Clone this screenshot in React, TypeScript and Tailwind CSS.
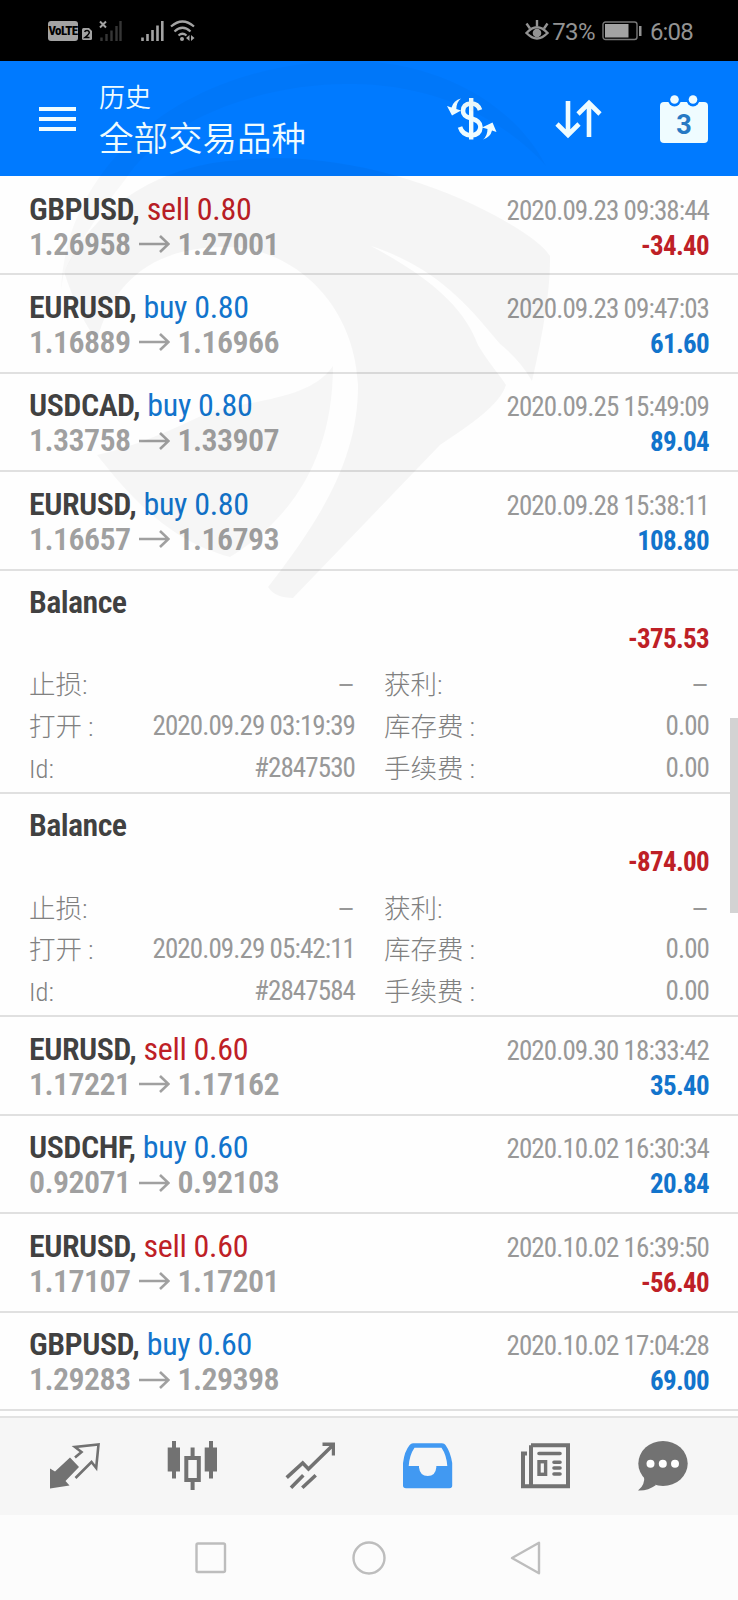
import React from 'react';

type Deal = {
  kind: 'deal';
  symbol: string;
  side: 'buy' | 'sell';
  volume: string;
  open: string;
  close: string;
  time: string;
  profit: string;
};

type Balance = {
  kind: 'balance';
  amount: string;
  time: string;
  id: string;
};

const history: (Deal | Balance)[] = [
  { kind: 'deal', symbol: 'GBPUSD', side: 'sell', volume: '0.80', open: '1.26958', close: '1.27001', time: '2020.09.23 09:38:44', profit: '-34.40' },
  { kind: 'deal', symbol: 'EURUSD', side: 'buy', volume: '0.80', open: '1.16889', close: '1.16966', time: '2020.09.23 09:47:03', profit: '61.60' },
  { kind: 'deal', symbol: 'USDCAD', side: 'buy', volume: '0.80', open: '1.33758', close: '1.33907', time: '2020.09.25 15:49:09', profit: '89.04' },
  { kind: 'deal', symbol: 'EURUSD', side: 'buy', volume: '0.80', open: '1.16657', close: '1.16793', time: '2020.09.28 15:38:11', profit: '108.80' },
  { kind: 'balance', amount: '-375.53', time: '2020.09.29 03:19:39', id: '#2847530' },
  { kind: 'balance', amount: '-874.00', time: '2020.09.29 05:42:11', id: '#2847584' },
  { kind: 'deal', symbol: 'EURUSD', side: 'sell', volume: '0.60', open: '1.17221', close: '1.17162', time: '2020.09.30 18:33:42', profit: '35.40' },
  { kind: 'deal', symbol: 'USDCHF', side: 'buy', volume: '0.60', open: '0.92071', close: '0.92103', time: '2020.10.02 16:30:34', profit: '20.84' },
  { kind: 'deal', symbol: 'EURUSD', side: 'sell', volume: '0.60', open: '1.17107', close: '1.17201', time: '2020.10.02 16:39:50', profit: '-56.40' },
  { kind: 'deal', symbol: 'GBPUSD', side: 'buy', volume: '0.60', open: '1.29283', close: '1.29398', time: '2020.10.02 17:04:28', profit: '69.00' },
];

const amountColor = (value: string) => (value.startsWith('-') ? 'text-[#be2026]' : 'text-[#1274cc]');

const StatusBar = () => (
  <div className="flex h-[61px] items-center bg-black pl-[48px] pr-[45px] text-[#939393]">
    <div className={'flex h-5 w-[30px] items-center justify-center rounded-[3px] bg-[#a3a3a3] font-["Roboto_Condensed"] text-[13px] font-extrabold tracking-[-0.6px] text-black'}>
      VoLTE
    </div>
    <svg className="ml-1 mt-[7px] h-3 w-[10px]" viewBox="0 0 10 12">
      <path d="M0 1.5Q0 0 1.500 0H7L10 3V10.500Q10 12 8.500 12H1.500Q0 12 0 10.500Z" fill="#a3a3a3" />
      <path d="M2.700 4Q3 2.500 5 2.500T7.300 4.500Q7.300 6 2.900 9.600H7.500" fill="none" stroke="#000" strokeWidth="1.500" />
    </svg>
    <svg className="ml-[6px] h-[22px] w-6" viewBox="0 0 24 22">
      <path d="M2 1.500L8 7.500M8 1.500L2 7.500" stroke="#a3a3a3" strokeWidth="2" />
      <path d="M3.500 21V17.500M8.500 21V14M13.500 21V10.500M18.500 21V6M22.500 21V1" stroke="#363636" strokeWidth="2.400" />
    </svg>
    <svg className="ml-[18px] h-[22px] w-6" viewBox="0 0 24 22">
      <path d="M2.500 21V17.500M7.500 21V14M12.500 21V10M17.500 21V5.500M22.300 21V1" stroke="#a3a3a3" strokeWidth="2.600" />
    </svg>
    <svg className="ml-[6px] h-[22px] w-[26px]" viewBox="0 0 26 22">
      <g fill="none" stroke="#a3a3a3" strokeWidth="2.200">
        <path d="M1 6.500Q12.500 -3.500 24 6.500" />
        <path d="M4.500 11.500Q12.500 4 20.500 11.500" />
        <path d="M8.500 15.500Q12.500 12 16.500 15.500" />
      </g>
      <circle cx="12" cy="19" r="2" fill="#a3a3a3" />
      <path d="M19.500 15V21L16 18ZM21 15V21L24.500 18Z" fill="#a3a3a3" />
    </svg>
    <svg className="ml-auto h-[22px] w-6" viewBox="0 0 24 22">
      <path d="M1.500 13Q12 1.500 22.500 13Q12 24 1.500 13Z" fill="none" stroke="#939393" strokeWidth="2.400" />
      <circle cx="12" cy="13" r="4.300" fill="#939393" />
      <path d="M12 0V6M1.500 3.500L5 8.500M22.500 3.500L19 8.500" stroke="#939393" strokeWidth="2.400" />
    </svg>
    <span className="ml-[3px] mt-[2px] text-[24px] leading-none tracking-[-0.6px]">73%</span>
    <svg className="ml-[7px] h-5 w-10" viewBox="0 0 40 20">
      <rect x="1" y="1" width="34" height="17.500" rx="2.500" fill="none" stroke="#777" strokeWidth="1.400" />
      <rect x="3" y="3" width="23.500" height="13.500" fill="#a3a3a3" />
      <rect x="37" y="5" width="2.500" height="10" fill="#939393" />
    </svg>
    <span className="ml-2 mt-[2px] text-[24px] leading-none tracking-[-0.8px]">6:08</span>
  </div>
);

const Header = () => (
  <div className="flex h-[115px] items-center bg-[#007aff] pl-[39px] pr-[30px] text-[#effcff]">
    <div className="flex w-[37px] flex-col gap-[6px]">
      <div className="h-1 bg-current" />
      <div className="h-1 bg-current" />
      <div className="h-1 bg-current" />
    </div>
    <div className={'ml-[23px] pb-[5px] font-["Noto_Sans_CJK_SC",sans-serif] font-[350]'}>
      <div className="text-[26px] leading-[40px]">历史</div>
      <div className="text-[34.500px] leading-[41px]">全部交易品种</div>
    </div>
    <svg className="ml-auto h-[46px] w-[50px]" viewBox="0 0 50 46">
      <path d="M33 14Q31 7.500 24 7.500Q16 8 16 15Q16 20.500 24.500 22.500Q33.500 25 33.500 31Q33 39 24 39.500Q15.500 39 13 31" fill="none" stroke="currentColor" strokeWidth="4.600" />
      <path d="M24.200 2V43.500" stroke="currentColor" strokeWidth="4.400" />
      <path d="M14 2.500Q9.500 6 9.300 13L14 14.500L5 19.500L0 10L4.500 11.500Q6.500 4.500 14 2.500Z" fill="currentColor" />
      <path d="M36 43.500Q40.500 40 40.500 33L35 31.500L45.500 26.500L49.500 36L45 34.500Q43.500 41 36 43.500Z" fill="currentColor" />
    </svg>
    <svg className="ml-[58px] h-10 w-[47px]" viewBox="0 0 47 40">
      <path d="M13 2V35M2 25L13 36L24 25M34 38V4M23 15L34 4L45 15" fill="none" stroke="currentColor" strokeWidth="4.600" />
    </svg>
    <svg className="ml-[58px] h-12 w-12" viewBox="0 0 48 48">
      <rect y="7" width="48" height="41" rx="4" fill="currentColor" />
      <circle cx="14.500" cy="5" r="6.500" fill="#007aff" />
      <circle cx="33" cy="5" r="6.500" fill="#007aff" />
      <circle cx="14.500" cy="4.500" r="4.300" fill="currentColor" />
      <circle cx="33" cy="4.500" r="4.300" fill="currentColor" />
      <text x="24" y="38.500" textAnchor="middle" fontSize="27" fontWeight="700" fill="#2779c4" fontFamily="Roboto">
        3
      </text>
    </svg>
  </div>
);

const DealRow = ({ deal }: { deal: Deal }) => (
  <div className={'h-[98.4px] border-b-2 border-[#e0e0e0] px-[29px] pt-[13.500px] font-["Roboto_Condensed"]'}>
    <div className="flex items-baseline justify-between">
      <div className="text-[32px] leading-[36px]">
        <span className="font-semibold tracking-[-0.5px] text-[#414141]">{deal.symbol},</span>{' '}
        <span className={deal.side === 'sell' ? 'tracking-[-0.3px] text-[#be2026]' : 'tracking-[-0.3px] text-[#1274cc]'}>
          {deal.side} {deal.volume}
        </span>
      </div>
      <div className="text-[27px] leading-[36px] tracking-[-0.9px] text-[#989898]">{deal.time}</div>
    </div>
    <div className="flex items-baseline justify-between">
      <div className="flex items-center text-[32px] font-semibold leading-[31px] tracking-[-0.6px] text-[#a0a0a0]">
        <span>{deal.open}</span>
        <svg className="ml-[9px] mr-[7px] h-[18px] w-[31px]" viewBox="0 0 31 18">
          <path d="M0 9H29M21 1L29.500 9L21 17" fill="none" stroke="currentColor" strokeWidth="2.600" />
        </svg>
        <span>{deal.close}</span>
      </div>
      <div className={`text-[27px] font-bold leading-[31px] tracking-[-0.7px] ${amountColor(deal.profit)}`}>{deal.profit}</div>
    </div>
  </div>
);

const Detail = ({ label, value }: { label: string; value: string }) => (
  <div className="flex h-[41.700px] items-center justify-between leading-[41px]">
    <span>{label}</span>
    {value === '–' ? (
      <span className="origin-right scale-x-120 font-normal text-[#989898]">{value}</span>
    ) : (
      <span className="text-[27px] font-normal tracking-[-0.9px] text-[#989898]">{value}</span>
    )}
  </div>
);

const BalanceRow = ({ item }: { item: Balance }) => (
  <div className={'h-[223.400px] border-b-2 border-[#e0e0e0] px-[29px] pt-[13.500px] font-["Roboto_Condensed","Noto_Sans_CJK_SC"]'}>
    <div className="text-[32px] font-semibold leading-[36px] tracking-[-0.6px] text-[#414141]">Balance</div>
    <div className={`text-right text-[27px] font-bold leading-[38px] tracking-[-0.7px] ${amountColor(item.amount)}`}>{item.amount}</div>
    <div className="mt-[6px] grid grid-cols-[326px_1fr] gap-x-[29px] text-[26.500px] font-light text-[#808080]">
      <Detail label="止损:" value="–" />
      <Detail label="获利:" value="–" />
      <Detail label="打开 :" value={item.time} />
      <Detail label="库存费 :" value="0.00" />
      <Detail label="Id:" value={item.id} />
      <Detail label="手续费 :" value="0.00" />
    </div>
  </div>
);

const tabIcons = [
  // quotes
  <>
    <path d="M0 27.500L5 30.500L20 16.500L29 26L15.500 40L19.500 44.500L0 47.500Z" fill="currentColor" />
    <path d="M25 16.500L31.500 11L25 6L48.500 3.500L46.200 27L41.500 21L25.500 37" fill="none" stroke="currentColor" strokeWidth="2.600" />
  </>,
  // charts
  <>
    <path d="M.7 6.500H13V30.500H.7ZM5 0H9V37.500H5ZM37.700 6.500H50V30.500H37.700ZM42 0H46V37.500H42Z" fill="currentColor" />
    <path d="M25.600 6.500V16M25.600 40V49" stroke="currentColor" strokeWidth="4" />
    <rect x="19.300" y="17" width="12.500" height="22" fill="none" stroke="currentColor" strokeWidth="4" />
  </>,
  // trade
  <path
    d="M1.700 36.700L17.700 22L23.500 28L47 5M37.500 3.200H48.600V14.500M6 46.700L18.300 34.300M17.300 46.700L30.700 34.300"
    fill="none"
    stroke="currentColor"
    strokeWidth="3.600"
  />,
  // history
  <path
    d="M0 22Q1.500 10 6.700 4Q8 2.300 10 2.300H39Q41.500 2.300 42.500 4Q47.500 11 49.200 22V44.500Q49.200 47.300 46.500 47.300H3Q0 47.300 0 44.500ZM5.700 25H16V26.500Q17 35 24.700 35Q32.500 35 33.300 26.500V25H44.300Q43.500 14 38.500 6.800H11.500Q6.500 14 5.700 25Z"
    fill="currentColor"
    fillRule="evenodd"
  />,
  // news
  <>
    <path d="M11 4.300H48V45.300H3V12.500H7M11 4.300V45" fill="none" stroke="currentColor" strokeWidth="4" />
    <path d="M19 12.500H40M34 21.200H40M34 27H40M34 33H40" stroke="currentColor" strokeWidth="3.600" strokeLinecap="round" />
    <rect x="19" y="20.700" width="6.600" height="12.600" fill="none" stroke="currentColor" strokeWidth="3.400" />
  </>,
  // messages
  <>
    <ellipse cx="25" cy="22.500" rx="24.700" ry="22.500" fill="currentColor" />
    <path d="M6 34Q7.500 44 0 49.500Q10 50 18 44Z" fill="currentColor" />
    <g fill="#fff">
      <circle cx="12.500" cy="22.700" r="4" />
      <circle cx="24.800" cy="22.700" r="4" />
      <circle cx="37" cy="22.700" r="4" />
    </g>
  </>,
];

const TabBar = () => (
  <div className="grid h-[99px] grid-cols-6 items-center border-t-2 border-[#e2e2e2] bg-[#f6f6f6] px-4 pb-[1px]">
    {tabIcons.map((icon, i) => (
      <svg
        key={i}
        className={`mx-auto h-[50px] w-[50px] ${i === 3 ? 'text-[#4199f2]' : 'text-[#727272]'}`}
        viewBox="0 0 50 50"
      >
        {icon}
      </svg>
    ))}
  </div>
);

const NavBar = () => (
  <div className="flex h-[85px] items-center justify-center gap-[124px] bg-[#fcfcfc] text-[#bdbdbd]">
    <svg className="h-[34px] w-[34px]" viewBox="0 0 34 34">
      <rect x="2.500" y="2.500" width="28.500" height="28.500" rx="1.500" fill="none" stroke="currentColor" strokeWidth="2.400" />
    </svg>
    <svg className="h-[34px] w-[34px]" viewBox="0 0 34 34">
      <circle cx="17" cy="17" r="15.500" fill="none" stroke="currentColor" strokeWidth="2.400" />
    </svg>
    <svg className="h-[34px] w-[34px]" viewBox="0 0 34 34">
      <path d="M2 17L29 1.800V32.200Z" fill="none" stroke="currentColor" strokeWidth="2.400" strokeLinejoin="round" />
    </svg>
  </div>
);

// faint eye logo laid over the header and the first rows
const Watermark = () => (
  <svg className="pointer-events-none absolute left-0 top-0 h-[620px] w-[738px]" viewBox="0 0 738 620">
    <g fill="#000">
      <path
        d="M61 290C66 160 190 61 350 61C440 61 515 105 546 166C500 115 430 84 350 84C250 84 160 125 125 180C105 205 84 235 64 272Z"
        fillOpacity="0.022"
      />
      <path
        d="M64 272C90 215 150 165 240 160C330 150 430 180 496 216Q540 240 550 256Q551 300 532 381Q520 360 500 344C460 295 430 266 371 246C435 280 465 310 478 345C490 365 500 375 506 385C500 405 470 425 440 445L293 598Q275 598 268 587C320 520 358 460 358 385C354 300 290 247 226 247C160 247 115 275 97 340Q80 320 64 272Z"
        fillOpacity="0.037"
      />
      <path
        d="M333 366C310 400 250 400 210 412C170 430 140 445 97 455C125 490 165 540 230 557C290 520 333 460 333 366Z"
        fillOpacity="0.03"
      />
    </g>
  </svg>
);

export default function App() {
  return (
    <div className="relative flex h-[1600px] w-[738px] flex-col overflow-hidden bg-[#fefefe] font-[Roboto]">
      <StatusBar />
      <Header />
      <div className="h-[1240px] overflow-hidden pt-[1px]">
        {history.map((item, i) =>
          item.kind === 'deal' ? <DealRow key={i} deal={item} /> : <BalanceRow key={i} item={item} />
        )}
      </div>
      <TabBar />
      <NavBar />
      <Watermark />
      {/* scroll thumb */}
      <div className="absolute right-0 top-[718px] h-[195px] w-2 bg-[#d3d3d3]" />
    </div>
  );
}
